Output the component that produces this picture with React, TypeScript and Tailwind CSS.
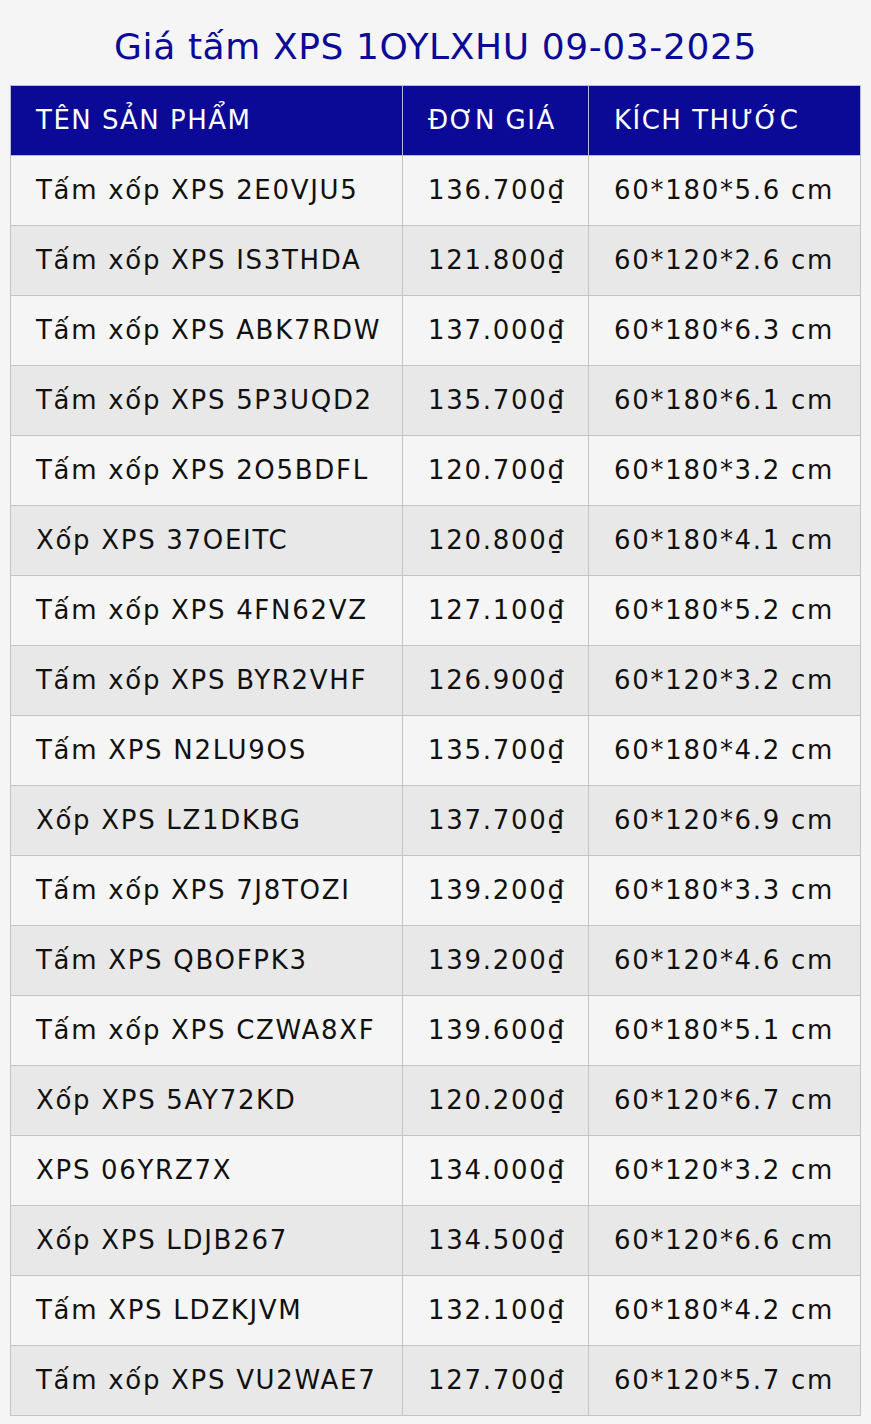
import React from 'react';

const rows: [string, string, string][] = [
  ['Tấm xốp XPS 2E0VJU5', '136.700₫', '60*180*5.6 cm'],
  ['Tấm xốp XPS IS3THDA', '121.800₫', '60*120*2.6 cm'],
  ['Tấm xốp XPS ABK7RDW', '137.000₫', '60*180*6.3 cm'],
  ['Tấm xốp XPS 5P3UQD2', '135.700₫', '60*180*6.1 cm'],
  ['Tấm xốp XPS 2O5BDFL', '120.700₫', '60*180*3.2 cm'],
  ['Xốp XPS 37OEITC', '120.800₫', '60*180*4.1 cm'],
  ['Tấm xốp XPS 4FN62VZ', '127.100₫', '60*180*5.2 cm'],
  ['Tấm xốp XPS BYR2VHF', '126.900₫', '60*120*3.2 cm'],
  ['Tấm XPS N2LU9OS', '135.700₫', '60*180*4.2 cm'],
  ['Xốp XPS LZ1DKBG', '137.700₫', '60*120*6.9 cm'],
  ['Tấm xốp XPS 7J8TOZI', '139.200₫', '60*180*3.3 cm'],
  ['Tấm XPS QBOFPK3', '139.200₫', '60*120*4.6 cm'],
  ['Tấm xốp XPS CZWA8XF', '139.600₫', '60*180*5.1 cm'],
  ['Xốp XPS 5AY72KD', '120.200₫', '60*120*6.7 cm'],
  ['XPS 06YRZ7X', '134.000₫', '60*120*3.2 cm'],
  ['Xốp XPS LDJB267', '134.500₫', '60*120*6.6 cm'],
  ['Tấm XPS LDZKJVM', '132.100₫', '60*180*4.2 cm'],
  ['Tấm xốp XPS VU2WAE7', '127.700₫', '60*120*5.7 cm'],
];

export default function App() {
  return (
    <div className="min-h-[1424px] bg-[#f5f5f5] px-[10px] font-['DejaVu_Sans',Verdana,sans-serif]">
      <h1 className="pt-[26px] pb-[17px] text-center text-[36px] leading-[42px] tracking-[0.6px] text-[#0a0a96]">
        Giá tấm XPS 1OYLXHU 09-03-2025
      </h1>
      <table className="w-[851px] table-fixed border-collapse">
        <thead>
          <tr className="bg-[#0a0a96] text-white text-[26px] leading-[29px] tracking-[1.5px]">
            <th className="w-[392px] border border-[#b8b8d8] py-[20px] pl-[25px] text-left font-normal">TÊN SẢN PHẨM</th>
            <th className="w-[186px] border border-[#b8b8d8] py-[20px] pl-[25px] text-left font-normal">ĐƠN GIÁ</th>
            <th className="border border-[#b8b8d8] py-[20px] pl-[25px] text-left font-normal">KÍCH THƯỚC</th>
          </tr>
        </thead>
        <tbody>
          {rows.map((r, i) => (
            <tr key={i} className={i % 2 === 0 ? 'bg-[#f5f5f5]' : 'bg-[#e8e8e8]'}>
              {r.map((c, j) => (
                <td key={j} className="border border-[#c4c4c4] py-[20px] pl-[25px] text-[26px] leading-[29px] tracking-[1.7px] text-[#111] whitespace-nowrap">
                  {c}
                </td>
              ))}
            </tr>
          ))}
        </tbody>
      </table>
    </div>
  );
}
